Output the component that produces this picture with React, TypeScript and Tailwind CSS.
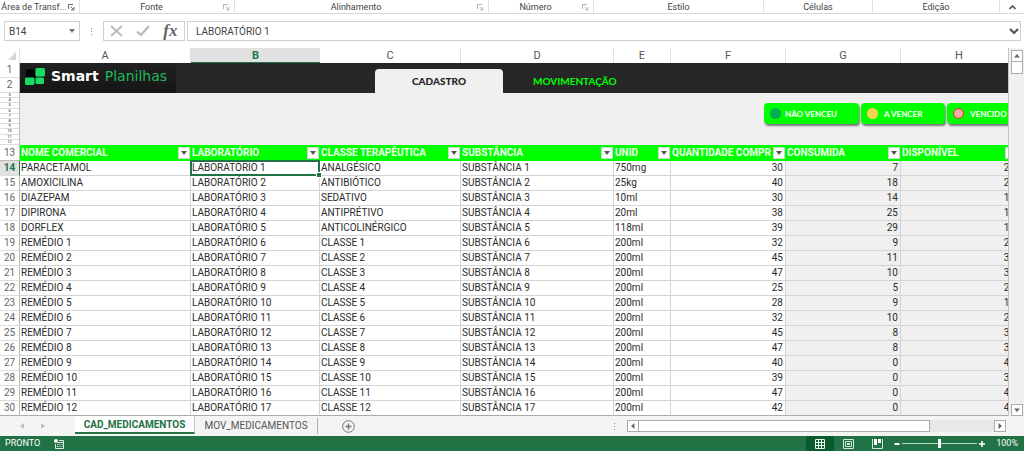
import type { ReactNode } from "react"

const groups = [
    { name: "Área de Transf...", launcher: true, dark: true },
    { name: "Fonte", launcher: true },
    { name: "Alinhamento", launcher: true },
    { name: "Número", launcher: true },
    { name: "Estilo" },
    { name: "Células" },
    { name: "Edição" },
]

const columns = [
    { letter: "A", title: "NOME COMERCIAL", width: "w-[171px]" },
    { letter: "B", title: "LABORATÓRIO", width: "w-[129px]" },
    { letter: "C", title: "CLASSE TERAPÊUTICA", width: "w-[141px]" },
    { letter: "D", title: "SUBSTÂNCIA", width: "w-[153px]" },
    { letter: "E", title: "UNID", width: "w-[57px]" },
    { letter: "F", title: "QUANTIDADE COMPR", width: "w-[115px]" },
    { letter: "G", title: "CONSUMIDA", width: "w-[115px]" },
    { letter: "H", title: "DISPONÍVEL", width: "w-[117px]" },
]

// nome, classe, unidade, comprada, consumida
const items: [string, string, string, number, number][] = [
    ["PARACETAMOL", "ANALGÉSICO", "750mg", 30, 7],
    ["AMOXICILINA", "ANTIBIÓTICO", "25kg", 40, 18],
    ["DIAZEPAM", "SEDATIVO", "10ml", 30, 14],
    ["DIPIRONA", "ANTIPRÉTIVO", "20ml", 38, 25],
    ["DORFLEX", "ANTICOLINÉRGICO", "118ml", 39, 29],
    ["REMÉDIO 1", "CLASSE 1", "200ml", 32, 9],
    ["REMÉDIO 2", "CLASSE 2", "200ml", 45, 11],
    ["REMÉDIO 3", "CLASSE 3", "200ml", 47, 10],
    ["REMÉDIO 4", "CLASSE 4", "200ml", 25, 5],
    ["REMÉDIO 5", "CLASSE 5", "200ml", 28, 9],
    ["REMÉDIO 6", "CLASSE 6", "200ml", 32, 10],
    ["REMÉDIO 7", "CLASSE 7", "200ml", 45, 8],
    ["REMÉDIO 8", "CLASSE 8", "200ml", 47, 8],
    ["REMÉDIO 9", "CLASSE 9", "200ml", 40, 0],
    ["REMÉDIO 10", "CLASSE 10", "200ml", 39, 0],
    ["REMÉDIO 11", "CLASSE 11", "200ml", 47, 0],
    ["REMÉDIO 12", "CLASSE 12", "200ml", 42, 0],
]

const Launcher = ({ dark }: { dark?: boolean }) => (
    <svg width="7" height="7" viewBox="0 0 7 7" fill="none" stroke={dark ? "#666" : "#b5b5b5"} className="mr-1 shrink-0">
        <path d="M0.5 5V0.5H5M2.5 2.5L5.5 5.5M6 3V6H3" />
    </svg>
)

const Ribbon = () => (
    <div className="grid h-3.5 grid-cols-[80fr_155fr_254fr_105fr_170fr_109fr_127fr_24px] border-b border-[#d8d8d8] text-[9px] leading-[14px] text-[#444]">
        {groups.map((group) => (
            <div key={group.name} className="flex items-center border-r border-[#e1e1e1]">
                <span className="flex-1 whitespace-nowrap text-center">{group.name}</span>
                {group.launcher && <Launcher dark={group.dark} />}
            </div>
        ))}
        <button aria-label="Recolher a faixa de opções" className="flex items-center justify-center">
            <svg width="7" height="5" viewBox="0 0 7 5" fill="none" stroke="#555" strokeWidth="1.6">
                <path d="M0.5 4L3.5 1L6.5 4" />
            </svg>
        </button>
    </div>
)

const Dots = () => (
    <div className="flex flex-col gap-0.5">
        <span className="size-px bg-[#888]" />
        <span className="size-px bg-[#888]" />
        <span className="size-px bg-[#888]" />
    </div>
)

const FormulaBar = () => (
    <div className="mt-[7px] flex h-5 items-stretch pl-1 pr-[3px] text-[10px] text-[#444]">
        <div className="flex w-[76px] items-center border border-[#cfcfcf] pr-1">
            <input aria-label="Caixa de nome" defaultValue="B14" className="w-full min-w-0 pl-1 outline-none" />
            <svg width="6" height="4" viewBox="0 0 6 4" className="shrink-0"><path d="M0 0H6L3 4Z" fill="#777" /></svg>
        </div>
        <div className="flex w-[23px] items-center justify-center"><Dots /></div>
        <div className="flex w-[82px] items-center justify-around border border-[#cfcfcf]">
            <button aria-label="Cancelar">
                <svg width="13" height="12" viewBox="0 0 13 12" stroke="#b9b9b9" strokeWidth="1.7" fill="none"><path d="M1 1L12 11M12 1L1 11" /></svg>
            </button>
            <button aria-label="Inserir">
                <svg width="14" height="12" viewBox="0 0 14 12" stroke="#b9b9b9" strokeWidth="2.2" fill="none"><path d="M1 6.5L5 10L13 1" /></svg>
            </button>
            <button aria-label="Inserir função" className="font-['Liberation_Serif',serif] text-[17px] font-bold italic leading-4 text-[#666]">
                fx
            </button>
        </div>
        <div className="ml-[2px] flex flex-1 items-center border border-[#cfcfcf] pr-[1px]">
            <input aria-label="Barra de fórmulas" defaultValue="LABORATÓRIO 1" className="w-full min-w-0 pl-2 outline-none" />
            <svg width="10" height="7" viewBox="0 0 10 7" fill="none" stroke="#555" strokeWidth="2.2" className="shrink-0"><path d="M1 1L5 5L9 1" /></svg>
        </div>
    </div>
)

const ColumnLetters = () => (
    <div className="flex h-[15px] text-[11px] leading-[15px] text-[#555]">
        <div className="flex w-5 items-end justify-end border-r border-[#e1e1e1] pb-[3px] pr-[3px]">
            <svg width="8" height="8" viewBox="0 0 8 8"><path d="M8 0V8H0Z" fill="#d5d5d5" /></svg>
        </div>
        {columns.map(({ letter, width }) => (
            <div
                key={letter}
                className={`${width} shrink-0 text-center ${letter === "B" ? "border-b border-[#217346] bg-[#e1e1e1] font-bold text-[#217346]" : "border-r border-[#e1e1e1]"}`}
            >
                {letter}
            </div>
        ))}
    </div>
)

const Logo = () => (
    <div className="flex w-[156px] items-center bg-linear-to-b from-[#222] to-[#151515] pb-1 pl-[5px] font-['DejaVu_Sans',sans-serif] text-[14px] font-normal leading-4">
        <svg width="20" height="17" viewBox="0 0 20 17" className="mr-1.5">
            <rect x="1" y="1.5" width="9" height="8" rx="1" fill="#000" />
            <rect x="10.5" y="0" width="9.5" height="8.5" rx="1.5" fill="#19dc64" />
            <rect x="0" y="9.5" width="9.5" height="7.5" rx="1.5" fill="#19dc64" />
            <rect x="10.5" y="9.5" width="8.5" height="6.5" rx="1.5" fill="#19dc64" />
        </svg>
        <span className="font-bold text-white">Smart</span>
        <span className="ml-1.5 text-[#1fb85a]">Planilhas</span>
    </div>
)

const Legend = ({ children, dot, className }: { children: ReactNode, dot: string, className: string }) => (
    <button className={`${className} flex h-[21px] shrink-0 items-center rounded-[4px] bg-[#00ff00] pl-1.5 font-['Lato',sans-serif] text-[8px] font-black text-[#efffef] shadow-[1px_2px_2px_#777]`}>
        <span className={`${dot} size-[11px] rounded-full`} />
        {children}
    </button>
)

const Banner = () => (
    <div className="flex">
        <div className="w-5 shrink-0 border-r border-[#bbb] text-center text-[10px] leading-[14px] text-[#666]">
            <div className="h-[15px] border-b border-[#ddd]">1</div>
            <div className="h-[15px] border-b border-[#ddd]">2</div>
            <div className="flex h-[52px] flex-col">
                {[3, 4, 5, 6, 7, 8, 9, 10, 11, 12].map((n) => (
                    <div key={n} className="min-h-0 flex-1 border-b border-[#ddd] text-[4px] leading-[4px] text-[#222]">{n}</div>
                ))}
            </div>
        </div>
        <div className="min-w-0 flex-1 bg-[#f0f0f0]">
            <div className="flex h-[30px] items-end bg-[#262626] font-['Lato',sans-serif] text-[10px] font-black">
                <div className="flex self-stretch"><Logo /></div>
                <button className="ml-[199px] h-6 w-32 rounded-t-[4px] bg-[#f0f0f0] text-[#222]">CADASTRO</button>
                <button className="ml-[30px] h-6 font-bold text-[#00ff00]">MOVIMENTAÇÃO</button>
            </div>
            <div className="flex h-[52px] items-start gap-[2px] pl-[744px] pt-2.5">
                <Legend dot="bg-[#00b050] mr-1" className="w-[95px]">NÃO VENCEU</Legend>
                <Legend dot="bg-[#ffd34f] mr-1.5" className="w-[84px]">A VENCER</Legend>
                <Legend dot="border border-[#c0392b] bg-[#f8a9a0] mr-1.5" className="w-[84px]">VENCIDO</Legend>
            </div>
        </div>
    </div>
)

const cell = "h-[15px] overflow-hidden whitespace-nowrap border-b border-r border-[#d4d4d4] py-0 pl-px pr-[2px] leading-[14px] group-last:border-b-[#ababab]"

const Sheet = () => (
    <table className="w-[1018px] table-fixed border-separate border-spacing-0 text-[10px] text-[#2b2b2b]">
        <colgroup>
            <col className="w-5" />
            {columns.map(({ letter, width }) => <col key={letter} className={width} />)}
        </colgroup>
        <thead>
            <tr>
                <th className="h-4 border-b border-r border-[#bbb] p-0 text-center font-normal leading-[15px] text-[#666]">13</th>
                {columns.map(({ letter, title }) => (
                    <th key={letter} scope="col" className="h-4 bg-[#00ff00] p-0 text-left font-bold text-[#f0fff0]">
                        <div className="flex h-4 items-center pl-px">
                            <span className="min-w-0 flex-1 whitespace-nowrap leading-4">{title}</span>
                            <button aria-label={`Filtrar ${title}`} className="mr-px flex size-3 shrink-0 items-center justify-center border border-[#c8d8c8] bg-white">
                                <svg width="6" height="4" viewBox="0 0 6 4"><path d="M0 0H6L3 4Z" fill="#555" /></svg>
                            </button>
                        </div>
                    </th>
                ))}
            </tr>
        </thead>
        <tbody>
            {items.map(([name, group, unit, bought, used], i) => (
                <tr key={name} className="group">
                    <th
                        scope="row"
                        className={`h-[15px] border-b border-r p-0 text-center leading-[14px] ${i === 0 ? "border-[#217346] border-b-[#ddd] bg-[#e1e1e1] font-bold text-[#217346]" : "border-[#bbb] border-b-[#ddd] font-normal text-[#666] group-last:border-b-[#ababab]"}`}
                    >
                        {i + 14}
                    </th>
                    <td className={cell}>{name}</td>
                    {i === 0 ? (
                        <td className="relative h-[15px] border-b border-r border-transparent py-0 pl-px pr-[2px] leading-[14px]">
                            LABORATÓRIO 1
                            <span className="absolute -inset-px border-2 border-[#217346]" />
                            <span className="absolute -bottom-[2px] -right-[2px] size-1 bg-[#217346] outline outline-white" />
                        </td>
                    ) : (
                        <td className={cell}>LABORATÓRIO {i + 1}</td>
                    )}
                    <td className={cell}>{group}</td>
                    <td className={cell}>SUBSTÂNCIA {i + 1}</td>
                    <td className={cell}>{unit}</td>
                    <td className={`${cell} text-right`}>{bought}</td>
                    <td className={`${cell} bg-[#f0f0f0] text-right`}>{used}</td>
                    <td className={`${cell} bg-[#f0f0f0] text-right`}>{bought - used}</td>
                </tr>
            ))}
        </tbody>
    </table>
)

const ScrollButton = ({ label, path }: { label: string, path: string }) => (
    <button aria-label={label} className="flex size-3 shrink-0 items-center justify-center border border-[#ababab] bg-white">
        <svg width="6" height="6" viewBox="0 0 6 6"><path d={path} fill="#666" /></svg>
    </button>
)

const SheetTabs = () => (
    <div className="flex h-5 items-center bg-[#f4f4f4] pr-[18px] text-[10px]">
        <div className="flex w-[75px] items-center gap-[17px] pl-5">
            <svg width="4" height="6" viewBox="0 0 4 6"><path d="M4 0V6L0 3Z" fill="#c0c0c0" /></svg>
            <svg width="4" height="6" viewBox="0 0 4 6"><path d="M0 0V6L4 3Z" fill="#c0c0c0" /></svg>
        </div>
        <button className="h-[18px] w-[120px] self-start border-b-2 border-r border-[#217346] border-r-[#c6c6c6] bg-white pt-px font-bold leading-[15px] text-[#217346]">
            CAD_MEDICAMENTOS
        </button>
        <button className="h-4 w-[123px] border-r border-[#ababab] leading-4 text-[#555]">MOV_MEDICAMENTOS</button>
        <button aria-label="Nova planilha" className="ml-6">
            <svg width="13" height="13" viewBox="0 0 13 13" fill="none" stroke="#777">
                <circle cx="6.5" cy="6.5" r="5.8" />
                <path d="M6.5 3.5V9.5M3.5 6.5H9.5" strokeWidth="1.5" />
            </svg>
        </button>
        <div className="ml-auto mr-3"><Dots /></div>
        <div className="flex w-[379px] bg-[#e8e8e8]">
            <ScrollButton label="Rolar para a esquerda" path="M4.5 0V6L1 3Z" />
            <div className="h-3 w-[291px] border border-l-0 border-[#ababab] bg-white" />
            <div className="ml-auto flex"><ScrollButton label="Rolar para a direita" path="M1.5 0V6L5 3Z" /></div>
        </div>
    </div>
)

const StatusBar = () => (
    <div className="flex h-[15px] items-center bg-[#217346] pl-[5px] pr-1.5 text-[9px] leading-[15px] text-white">
        <span>PRONTO</span>
        <svg width="10" height="10" viewBox="0 0 10 10" fill="none" stroke="#dcebe2" className="ml-3.5">
            <circle cx="2" cy="2" r="2" fill="#fff" stroke="none" />
            <path d="M5 1.5H9.5V9.5H1.5V5M3.5 3.5H9.5M3 5.5H4.5M5.5 5.5H6.5M7.5 5.5H8.5M3 7.5H4.5M5.5 7.5H6.5M7.5 7.5H8.5" />
        </svg>
        <div className="ml-auto flex h-full">
            <button aria-label="Normal" className="flex w-7 items-center justify-center bg-[#0a5c2e]">
                <svg width="10" height="10" viewBox="0 0 10 10" fill="none" stroke="#e6f2eb"><path d="M0.5 0.5H9.5V9.5H0.5ZM0.5 3.5H9.5M0.5 6.5H9.5M3.5 0V10M6.5 0V10" /></svg>
            </button>
            <button aria-label="Layout da página" className="flex w-[29px] items-center justify-center">
                <svg width="11" height="10" viewBox="0 0 11 10" fill="none" stroke="#cfe3d7"><path d="M0.5 0.5H10.5V9.5H0.5ZM2.5 2.5H8.5V7.5H2.5ZM4 4.5H7M4 5.5H7" /></svg>
            </button>
            <button aria-label="Visualização de quebra de página" className="flex w-7 items-center justify-center">
                <svg width="11" height="10" viewBox="0 0 11 10" fill="none" stroke="#cfe3d7"><path d="M0.5 0V9.5H10.5V0" /><path d="M2 0H5V6H2ZM6 0H9V4H6Z" fill="#fff" stroke="none" /></svg>
            </button>
        </div>
        <button aria-label="Reduzir" className="ml-[3px]">
            <svg width="6" height="6" viewBox="0 0 6 6"><path d="M0.5 2H5.5V4H0.5Z" fill="#fff" /></svg>
        </button>
        <input
            type="range"
            aria-label="Zoom"
            defaultValue={50}
            className="mx-[2px] h-[9px] w-[75px] appearance-none bg-transparent [&::-webkit-slider-runnable-track]:h-px [&::-webkit-slider-runnable-track]:bg-[#b9d5c5] [&::-webkit-slider-thumb]:-mt-1 [&::-webkit-slider-thumb]:h-[9px] [&::-webkit-slider-thumb]:w-[3px] [&::-webkit-slider-thumb]:appearance-none [&::-webkit-slider-thumb]:bg-white"
        />
        <button aria-label="Ampliar">
            <svg width="6" height="6" viewBox="0 0 6 6"><path d="M0 2.2H2.2V0H3.8V2.2H6V3.8H3.8V6H2.2V3.8H0Z" fill="#fff" /></svg>
        </button>
        <span className="w-[33px] text-right">100%</span>
    </div>
)

const App = () => {
    return (
        <div className="bg-white font-['Roboto',sans-serif]">
            <Ribbon />
            <FormulaBar />
            <div className="mt-[7px] flex">
                <div className="min-w-0 flex-1 overflow-hidden">
                    <div className="w-[1018px]">
                        <ColumnLetters />
                        <Banner />
                        <Sheet />
                    </div>
                </div>
                <div className="flex w-4 flex-col items-center border-l border-[#c6c6c6] bg-[#f0f0f0] pt-[2px]">
                    <ScrollButton label="Rolar para cima" path="M0 4.5H6L3 1Z" />
                    <div className="h-3 w-3 border border-t-0 border-[#ababab] bg-white" />
                    <div className="mt-auto"><ScrollButton label="Rolar para baixo" path="M0 1.5H6L3 5Z" /></div>
                </div>
            </div>
            <SheetTabs />
            <StatusBar />
        </div>
    )
}

export default App
